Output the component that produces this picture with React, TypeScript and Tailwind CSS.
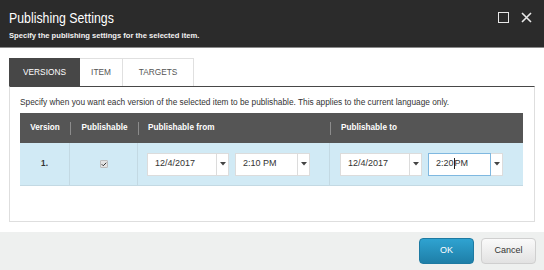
import { Check } from "lucide-react";

function Caret() {
  return (
    <svg width="6" height="4" viewBox="0 0 6 4" className="text-[#444]">
      <path d="M0 0h6L3 3.5z" fill="currentColor" />
    </svg>
  );
}

function DateTimeField({ value, focused, caretAt }: { value: string; focused?: boolean; caretAt?: number }) {
  const text =
    caretAt !== undefined ? (
      <>
        {value.slice(0, caretAt)}
        <span className="inline-block w-px h-[11px] bg-[#222] align-middle -mt-[2px]" />
        {value.slice(caretAt)}
      </>
    ) : (
      value
    );
  return (
    <div className="flex h-[23px]">
      <div
        className={
          focused
            ? "flex-1 bg-white border border-[#7fb8e0] flex items-center pl-[7px] text-[9px] text-[#333]"
            : "flex-1 bg-white border border-[#dcdcdc] flex items-center pl-[7px] text-[9px] text-[#333]"
        }
      >
        {text}
      </div>
      <div className="w-[12px] bg-white border border-l-0 border-[#dcdcdc] flex items-center justify-center">
        <Caret />
      </div>
    </div>
  );
}

function Range({ date, time, focused }: { date: string; time: string; focused?: boolean }) {
  return (
    <div className="flex gap-[6px]">
      <div className="w-[82px]">
        <DateTimeField value={date} />
      </div>
      <div className="w-[75px]">
        <DateTimeField value={time} focused={focused} caretAt={focused ? 4 : undefined} />
      </div>
    </div>
  );
}

export default function App() {
  return (
    <div className="w-[544px] h-[270px] bg-white flex flex-col overflow-hidden font-['Liberation_Sans',Arial,sans-serif]">
      <div className="h-[48px] bg-[#2b2b2b] border-b border-[#8a8a8a] flex justify-between px-[9px]">
        <div className="pt-[10px]">
          <div className="text-[14px] leading-[17px] text-white origin-left scale-x-[0.88] whitespace-nowrap">
            Publishing Settings
          </div>
          <div className="text-[7.6px] leading-[11px] mt-[3px] font-bold text-[#f2f2f2]">
            Specify the publishing settings for the selected item.
          </div>
        </div>
        <div className="flex items-start gap-[12px] pt-[12px] pr-[3px]">
          <div className="w-[11px] h-[11px] border-[1.5px] border-[#e8e8e8]" />
          <svg width="11" height="11" viewBox="0 0 11 11">
            <path d="M1 1l9 9M10 1l-9 9" stroke="#e8e8e8" strokeWidth="1.6" />
          </svg>
        </div>
      </div>

      <div className="px-[9px] pt-[10px]">
        <div className="flex h-[28px] text-[8.3px]">
          <div className="w-[71px] bg-[#474747] text-white flex items-center justify-center">VERSIONS</div>
          <div className="w-[43px] border-t border-r border-[#e0e0e0] text-[#555] flex items-center justify-center">
            ITEM
          </div>
          <div className="w-[71px] border-t border-r border-[#e0e0e0] text-[#555] flex items-center justify-center">
            TARGETS
          </div>
        </div>
        <div className="h-[136px] border border-[#dedede] border-t-[#474747] px-[10px] pt-[7px]">
          <div className="text-[8.3px] leading-[16px] text-[#333]">
            Specify when you want each version of the selected item to be publishable. This applies to the current
            language only.
          </div>
          <div className="mt-[3px] w-[503px] text-[8.2px]">
            <div className="flex h-[30px] bg-[#555555] text-white font-bold items-center">
              <div className="w-[50px] text-center">Version</div>
              <div className="w-px h-[13px] bg-[#8c8c8c]" />
              <div className="w-[67px] text-center">Publishable</div>
              <div className="w-px h-[13px] bg-[#8c8c8c]" />
              <div className="w-[191px] pl-[9px]">Publishable from</div>
              <div className="w-px h-[13px] bg-[#8c8c8c]" />
              <div className="flex-1 pl-[10px]">Publishable to</div>
            </div>
            <div className="flex h-[43px] bg-[#d1eaf5] border-b border-[#c3d9e3]">
              <div className="w-[50px] flex items-center justify-center font-bold text-[#333] border-r border-[#c3d9e3]">
                1.
              </div>
              <div className="w-[68px] flex items-center justify-center border-r border-[#c3d9e3]">
                <div className="w-[8px] h-[8px] bg-[#e3e3e3] border border-[#bdbdbd] rounded-[1px] flex items-center justify-center">
                  <Check className="w-[7px] h-[7px] text-[#333]" strokeWidth={4} />
                </div>
              </div>
              <div className="w-[192px] flex items-center pl-[9px] border-r border-[#c3d9e3]">
                <Range date="12/4/2017" time="2:10 PM" />
              </div>
              <div className="flex-1 flex items-center pl-[10px]">
                <Range date="12/4/2017" time="2:20 PM" focused />
              </div>
            </div>
          </div>
        </div>
      </div>

      <div className="mt-auto h-[38px] bg-[#eef0ef] flex items-center justify-end gap-[7px] pr-[8px]">
        <button className="w-[55px] h-[26px] rounded-[4px] bg-gradient-to-b from-[#2fa3d1] to-[#1e7fa8] text-white text-[9px] border border-[#1d7aa2]">
          OK
        </button>
        <button className="w-[55px] h-[26px] rounded-[4px] bg-gradient-to-b from-[#fafafa] to-[#e2e2e2] text-[#333] text-[9px] border border-[#cfcfcf]">
          Cancel
        </button>
      </div>
    </div>
  );
}
